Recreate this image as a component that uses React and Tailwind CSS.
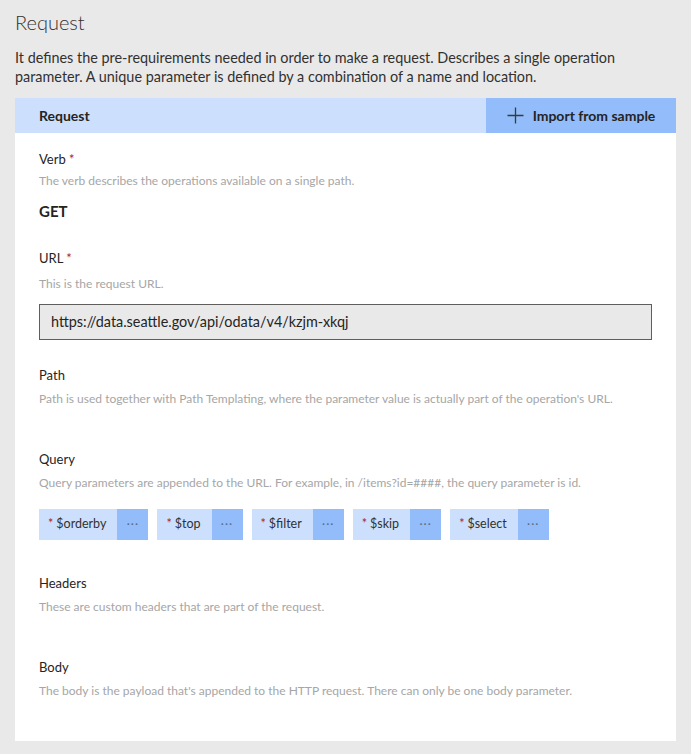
import React from "react";

const font = { fontFamily: 'Lato, "Open Sans", "Liberation Sans", sans-serif' };

function Field({ label, required, desc, descGap = "mt-[6px]", children, className = "" }) {
  return (
    <div className={className}>
      <div className="text-[13px] leading-[18px] text-[#252423]">
        {label}
        {required && <span className="text-[#a4262c]"> *</span>}
      </div>
      <div className={`${descGap} text-[12px] leading-[18px] text-[#a6a6a6]`}>{desc}</div>
      {children}
    </div>
  );
}

function Chip({ name }) {
  return (
    <div className="flex h-[31px] items-stretch bg-[#cce0fd]">
      <div className="flex items-center pl-[9px] pr-[11px] text-[12.5px] text-[#323130]">
        <span className="mr-[3px] text-[#a4262c]">*</span>
        {name}
      </div>
      <div className="flex w-[31px] items-center justify-center bg-[#92bdfa] text-[12px] tracking-[1px] text-[#5d6e86]">
        ···
      </div>
    </div>
  );
}

export default function App() {
  const params = ["$orderby", "$top", "$filter", "$skip", "$select"];

  return (
    <div className="min-h-[754px] bg-[#e9e9e9] px-[15px] pt-[8px] pb-[14px]" style={font}>
      <h1 className="text-[20px] leading-[28px] font-light text-[#323130]">Request</h1>
      <p className="mt-[12px] text-[14.4px] leading-[19px] text-[#323130]">
        It defines the pre-requirements needed in order to make a request. Describes a single operation parameter. A unique
        parameter is defined by a combination of a name and location.
      </p>

      <div className="mt-[12px] bg-white">
        <div className="flex h-[35px] items-stretch bg-[#cce0fd]">
          <div className="flex flex-1 items-center pl-[24px] text-[14px] font-bold text-[#252423]">Request</div>
          <button className="flex w-[190px] items-center justify-center gap-[9px] bg-[#92bdfa] text-[14px] font-bold text-[#252423]">
            <svg width="17" height="17" viewBox="0 0 17 17" fill="none" stroke="#3b3a39" strokeWidth="1.3">
              <path d="M8.5 0.5v16M0.5 8.5h16" />
            </svg>
            Import from sample
          </button>
        </div>

        <div className="px-[24px] pt-[17px] pb-[41px]">
          <Field
            label="Verb"
            required
            descGap="mt-[4px]"
            desc="The verb describes the operations available on a single path."
          >
            <div className="mt-[10px] text-[15px] font-bold text-[#252423]">GET</div>
          </Field>

          <Field label="URL" required descGap="mt-[8px]" desc="This is the request URL." className="mt-[26px]">
            <div className="mt-[11px] flex h-[36px] items-center border border-[#605e5c] bg-[#e9e9e9] pl-[11px] text-[14.4px] text-[#252423]">
              https://data.seattle.gov/api/odata/v4/kzjm-xkqj
            </div>
          </Field>

          <Field
            label="Path"
            desc="Path is used together with Path Templating, where the parameter value is actually part of the operation's URL."
            className="mt-[26px]"
          />

          <Field
            label="Query"
            desc="Query parameters are appended to the URL. For example, in /items?id=####, the query parameter is id."
            className="mt-[42px]"
          >
            <div className="mt-[17px] flex gap-[9px]">
              {params.map((p) => (
                <Chip key={p} name={p} />
              ))}
            </div>
          </Field>

          <Field
            label="Headers"
            desc="These are custom headers that are part of the request."
            className="mt-[34px]"
          />

          <Field
            label="Body"
            desc="The body is the payload that's appended to the HTTP request. There can only be one body parameter."
            className="mt-[42px]"
          />
        </div>
      </div>
    </div>
  );
}
